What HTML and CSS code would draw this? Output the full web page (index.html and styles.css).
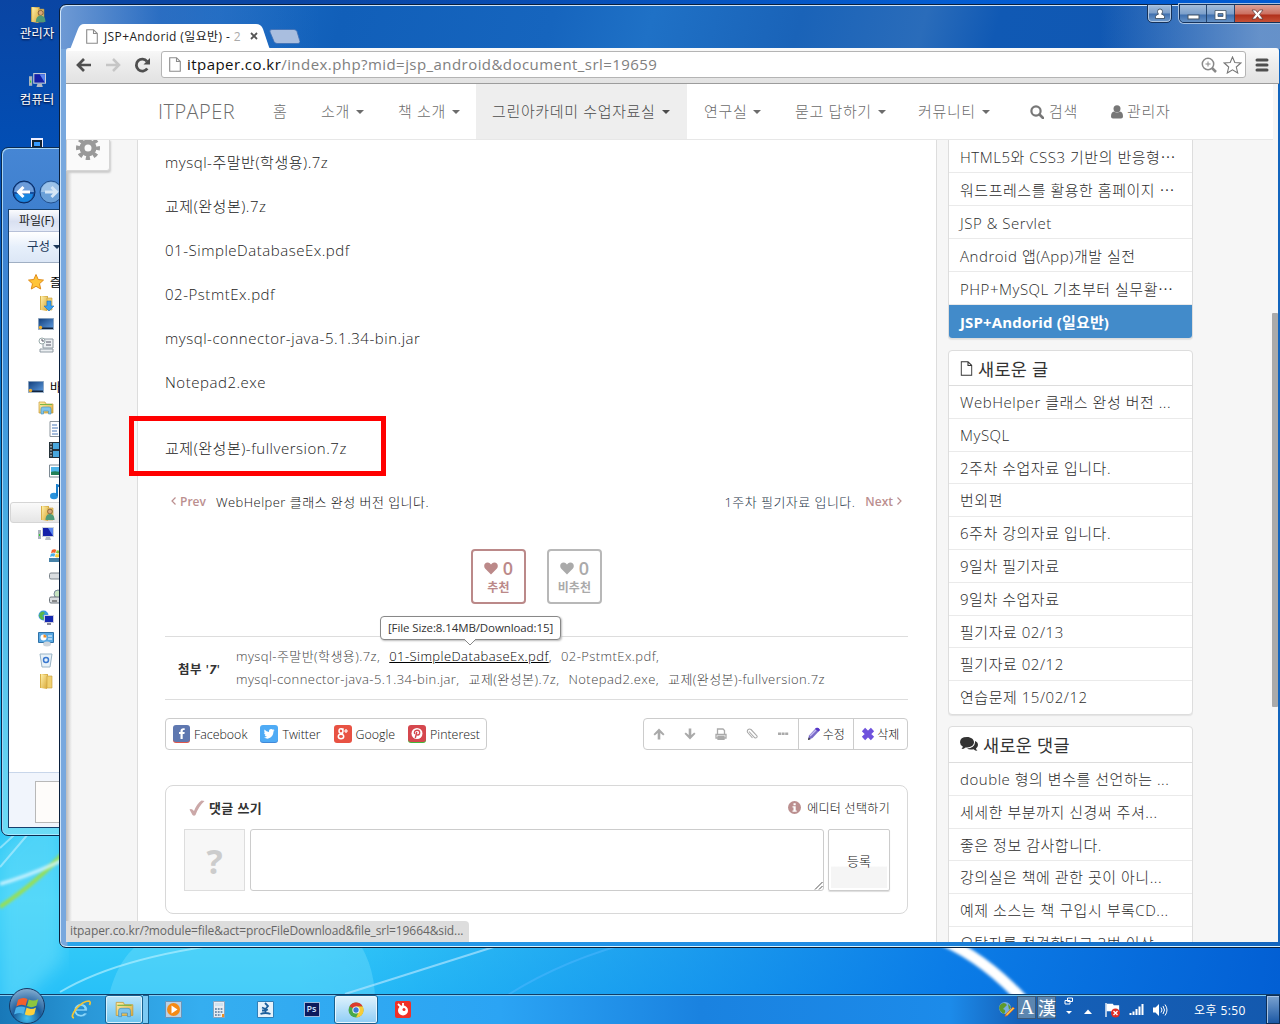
FILE: index.html
```html
<!DOCTYPE html>
<html lang="ko">
<head>
<meta charset="utf-8">
<title>JSP+Andorid (일요반)</title>
<link rel="stylesheet" href="styles.css">
</head>
<body>
<svg width="0" height="0" class="defs">
  <defs>
    <linearGradient id="gold" x1="0" y1="0" x2="1" y2="1"><stop offset="0" stop-color="#fff0a8"/><stop offset="1" stop-color="#d9a93a"/></linearGradient>
    <linearGradient id="screen" x1="0" y1="0" x2="1" y2="1"><stop offset="0" stop-color="#14407c"/><stop offset="1" stop-color="#5d9be0"/></linearGradient>
    <symbol id="folder" viewBox="0 0 16 16"><path d="M2 1h8v14H2z" fill="#d8b04a"/><path d="M3 1l6 1v14l-6-1z" fill="url(#gold)"/><path d="M9 3h5v12H9z" fill="#f0d070" stroke="#c89b35" stroke-width=".6"/></symbol>
    <symbol id="user-folder" viewBox="0 0 16 16"><use href="#folder"/><circle cx="11" cy="6.5" r="2.4" fill="#d8a878" stroke="#6b4a2a" stroke-width=".7"/><path d="M6.5 15c0-4 2-6 4.5-6s4.500 2 4.500 6z" fill="#4f9a78"/></symbol>
    <symbol id="computer" viewBox="0 0 16 16"><path d="M0 4h3v9H0z" fill="#aab4bc"/><path d="M1 8h1v2H1z" fill="#3c3"/><path d="M4 1h12v10H4z" fill="#ccd3da"/><path d="M5 2h10v8H5z" fill="#1420a8"/><path d="M10 2h5v8z" fill="#5a86f0"/><path d="M8 11h4l1 3H7z" fill="#b5bcc4"/></symbol>
    <symbol id="desktop" viewBox="0 0 16 16"><path d="M0 2h16v12H0z" fill="#9fb3c8"/><path d="M.8 2.800h14.400v10H.8z" fill="url(#screen)"/><path d="M1 11.500h14v1.500H1z" fill="#12243e"/><circle cx="2.500" cy="11.500" r="1.700" fill="#f0b030"/></symbol>
    <symbol id="library" viewBox="0 0 16 16"><path d="M1 2h6l1 2h7v9H1z" fill="url(#gold)" stroke="#c79b3a" stroke-width=".7"/><path d="M2 4.500h12" stroke="#7ab648"/><path d="M3 14V9q0-2 2-2h6q2 0 2 2v5h-2.500v-3h-5v3z" fill="#7fc4ea" stroke="#4590c0" stroke-width=".6"/></symbol>
    <symbol id="page" viewBox="0 0 12 15"><path d="M.7.7h6.800l3.800 3.800v9.800H.7zM7.500.7v3.800h3.800" fill="#fff" stroke="currentColor" stroke-width="1.100"/></symbol>
    <symbol id="heart" viewBox="0 0 14 13"><path d="M7 12.500L1.300 6.800C-1 4 .5.500 3.600.5 5.500.5 6.500 1.800 7 2.600 7.500 1.800 8.500.5 10.400.5c3.100 0 4.600 3.500 2.300 6.300z" fill="currentColor"/></symbol>
    <symbol id="arrow" viewBox="0 0 12 12"><path d="M6 .5l5.500 5.700-1.300 1.400-2.900-2.700V11.500H4.700V4.900L1.800 7.600.5 6.200z" fill="currentColor"/></symbol>
    <symbol id="flag4" viewBox="0 0 20 20"><path d="M3 5q3.500-2.500 7-.5L8.600 9.500Q5 7.800 1.700 10z" fill="#f2602c"/><path d="M11 4.800q3.500 1.800 7-.3L16.600 9.400q-3.500 2-7 .3z" fill="#8dc63f"/><path d="M1.400 11q3.500-2 7-.3L7 15.600q-3.500-1.800-7 .4z" fill="#4ab2ea"/><path d="M9.300 11q3.500 1.800 7-.3L15 15.700q-3.500 2-7 .2z" fill="#fcd03c"/></symbol>
  </defs>
</svg>

<div class="screen">
  <svg class="wallpaper" viewBox="0 0 1280 1024">
    <defs><filter id="soft"><feGaussianBlur stdDeviation="1.500"/></filter><filter id="wide"><feGaussianBlur stdDeviation="8"/></filter></defs>
    <path d="M0 850L62 790V960L0 1024z" fill="#6fe0fb" opacity=".5" filter="url(#wide)"/>
    <path d="M108 1000Q120 940 170 930H350Q375 960 375 1000z" fill="#7fe2fb" opacity=".35"/>
    <path d="M0 907Q40 880 64 852" fill="none" stroke="#9be04a" stroke-width="4" filter="url(#soft)"/>
    <path d="M0 884Q50 870 110 835" fill="none" stroke="#d8f6ff" stroke-width="3" filter="url(#soft)"/>
    <path d="M0 867L40 820M0 848L24 826" stroke="#c0f0ff" stroke-width="2" opacity=".6"/>
    <path d="M60 992Q130 950 280 938" fill="none" stroke="#aeeeff" stroke-width="2" opacity=".7"/>
    <path d="M345 994L500 945" stroke="#aee4ff" stroke-width="2" opacity=".7"/>
    <path d="M500 1000Q560 960 640 940" fill="none" stroke="#50b8ff" stroke-width="2" opacity=".5"/>
    <path d="M942 940Q998 964 1048 1030" fill="none" stroke="#fff" stroke-width="11" filter="url(#soft)"/>
  </svg>

  <div class="desk-icons">
    <div class="desk-icon"><svg width="17" height="17"><use href="#user-folder"/></svg><span>관리자</span></div>
    <div class="desk-icon"><svg width="17" height="17"><use href="#computer"/></svg><span>컴퓨터</span></div>
    <div class="desk-icon"><svg width="17" height="17" viewBox="0 0 17 17"><path d="M2 0h12v12H2z" fill="#eef"/><path d="M3 2h10v8H3z" fill="#123"/><path d="M5 4h6v4H5z" fill="#39f"/></svg></div>
  </div>

  <div class="explorer">
    <div class="ex-title">
      <svg width="24" height="24" viewBox="0 0 24 24"><circle cx="12" cy="12" r="11" fill="#174fa0" stroke="#0b2a5e"/><path d="M2 12a10 10 0 0 1 20 0z" fill="#6c9bd8"/><path d="M3 14a9 8 0 0 0 18 0z" fill="#1a86e0"/><path d="M18 12H7M11.500 7L6.500 12l5 5" stroke="#fff" stroke-width="3" fill="none"/></svg>
      <svg width="24" height="24" viewBox="0 0 24 24"><circle cx="12" cy="12" r="11" fill="#6aa0d8" stroke="#22508e"/><path d="M2 12a10 10 0 0 1 20 0z" fill="#9cc2e8"/><path d="M6 12h11M12.500 7l5 5-5 5" stroke="#d4e6f6" stroke-width="3" fill="none"/></svg>
    </div>
    <div class="ex-body">
      <div class="ex-menu">파일(F)</div>
      <div class="ex-bar">구성 <i class="caret"></i></div>
      <div class="ex-tree">
        <div class="tr l1"><svg width="16" height="16" viewBox="0 0 16 16"><path d="M8 .5l2.200 5 5.300.6-4 3.600 1.200 5.300L8 12.300 3.300 15l1.200-5.300-4-3.600 5.300-.6z" fill="#ffc53a" stroke="#e08a18"/></svg><span>즐겨</span></div>
        <div class="tr l2"><svg width="16" height="16" viewBox="0 0 16 16"><use href="#folder"/><path d="M9 6h4v5h3l-5 5-5-5h3z" fill="#3aa0ee" stroke="#1b6fc0" stroke-width=".6"/></svg></div>
        <div class="tr l2"><svg width="16" height="16"><use href="#desktop"/></svg></div>
        <div class="tr l2"><svg width="16" height="16" viewBox="0 0 16 16"><path d="M5 2h10v9H5zM2 12h13v3H2z" fill="#eceff2" stroke="#8f9aa3"/><circle cx="4" cy="4" r="3" fill="#fff" stroke="#9aa"/><path d="M4 2v2h2M8 5h5M8 8h5" stroke="#556" fill="none"/></svg></div>
        <div class="tr"></div>
        <div class="tr l1"><svg width="16" height="16"><use href="#desktop"/></svg><span>바탕</span></div>
        <div class="tr l2"><svg width="16" height="16"><use href="#library"/></svg></div>
        <div class="tr l3"><svg width="16" height="16" viewBox="0 0 16 16"><path d="M1 .5h14v15H1z" fill="#fff" stroke="#8b949c"/><path d="M3 4h5M3 7h6M3 10h5M3 13h6" stroke="#4a78b8"/></svg></div>
        <div class="tr l3"><svg width="16" height="16" viewBox="0 0 16 16"><path d="M0 0h16v16H0z" fill="#26323a"/><path d="M4 1h12v6H4zM4 9h12v6H4z" fill="#49a7de"/><path d="M2 1v14" stroke="#fff" stroke-dasharray="1.500"/></svg></div>
        <div class="tr l3"><svg width="16" height="16" viewBox="0 0 16 16"><path d="M.5 2h15v12H.5z" fill="#fff" stroke="#7d8a94"/><path d="M2 4h13v8H2z" fill="#4fb4e8"/><path d="M2 9q4-2 13 1v2H2z" fill="#228058"/></svg></div>
        <div class="tr l3"><svg width="16" height="16" viewBox="0 0 16 16"><ellipse cx="5" cy="12" rx="4" ry="3.200" fill="#2a92dc"/><path d="M8 12V1l6 3" stroke="#1a7fcc" stroke-width="2" fill="none"/></svg></div>
        <div class="tr l2 sel"><svg width="16" height="16"><use href="#user-folder"/></svg></div>
        <div class="tr l2"><svg width="16" height="16"><use href="#computer"/></svg></div>
        <div class="tr l3"><svg width="16" height="16" viewBox="0 0 16 16"><path d="M0 11h16v4H0z" fill="#4782a8"/><g transform="translate(1 0) scale(.62)"><use href="#flag4" width="20" height="20"/></g></svg></div>
        <div class="tr l3"><svg width="16" height="16" viewBox="0 0 16 16"><rect x=".5" y="5" width="15" height="6" rx="1.500" fill="#dadde0" stroke="#7c858c"/></svg></div>
        <div class="tr l3"><svg width="16" height="16" viewBox="0 0 16 16"><circle cx="9" cy="5" r="4" fill="#c5e2c0" stroke="#789"/><rect x=".5" y="8" width="15" height="6" rx="1.500" fill="#dadde0" stroke="#6c757c"/><path d="M3 12h5" stroke="#333"/></svg></div>
        <div class="tr l2"><svg width="16" height="16" viewBox="0 0 16 16"><circle cx="5.500" cy="5.500" r="5" fill="#3a9be0"/><path d="M2 3q3-3 5 0L4 6q3 1 1 4-3-1-4-4z" fill="#5ab848"/><path d="M6 5h10v8H6z" fill="#ccd"/><path d="M7 6h8v6H7z" fill="#1428b0"/><path d="M9 13h4v2H9z" fill="#889"/></svg></div>
        <div class="tr l2"><svg width="16" height="16" viewBox="0 0 16 16"><path d="M.5 1.500h15v10H.5z" fill="#59a8e2" stroke="#2f72a8"/><circle cx="5.500" cy="6.500" r="3" fill="#fff"/><path d="M5.500 6.500v-3a3 3 0 0 1 3 3z" fill="#f08a20"/><path d="M10 5h4M10 8h4" stroke="#fff"/><ellipse cx="9" cy="13" rx="4" ry="2.500" fill="#cdd5dc"/></svg></div>
        <div class="tr l2"><svg width="16" height="16" viewBox="0 0 16 16"><path d="M2 2h12l-2 13H4z" fill="#e8f2f8" stroke="#9ab4c6"/><circle cx="8" cy="8" r="2.500" fill="none" stroke="#3a78d0" stroke-width="1.500"/></svg></div>
        <div class="tr l2"><svg width="16" height="16"><use href="#folder"/></svg></div>
      </div>
      <div class="ex-detail"><div class="ex-thumb"></div></div>
    </div>
  </div>

  <div class="chrome">
    <div class="tabstrip">
      <div class="tab">
        <svg class="tab-bg" width="206" height="27" viewBox="0 0 206 27"><path d="M0 27q4-1 5-4l7-18q2-5 6-5H190q5 0 7 5l6 18q1 3 3 4z" fill="#fff"/></svg>
        <div class="tab-in"><svg class="grey" width="12" height="15"><use href="#page"/></svg><span class="tab-title">JSP+Andorid (일요반) - <b>2</b></span>
        <svg width="8" height="8" viewBox="0 0 8 8"><path d="M1 1l6 6M7 1L1 7" stroke="#555" stroke-width="1.800"/></svg></div>
      </div>
      <svg class="newtab" width="31" height="15" viewBox="0 0 31 15"><path d="M3 .5h22q2 0 3 2l3 10q0 2-2 2H8q-2 0-3-2L1 3Q0 .5 3 .5z" fill="#a9bedf" stroke="#3f6fb4" stroke-width=".8"/></svg>
      <div class="winbtns">
        <div class="wb user"><svg width="12" height="11" viewBox="0 0 12 11"><path d="M1.500 10.500V8.500Q2 6.500 4.500 6.200 3.500 5 3.500 3.500 3.500 1 6 1t2.500 2.500Q8.500 5 7.500 6.200 10 6.500 10.500 8.500v2z" fill="#fff" stroke="#345" stroke-width=".8"/></svg></div>
        <div class="wbs"><div class="wb min"><svg width="13" height="6" viewBox="0 0 13 6"><rect x="1" y="1" width="11" height="4" fill="#fff" stroke="#456"/></svg></div><div class="wb max"><svg width="13" height="10" viewBox="0 0 13 10"><path d="M1 .5h11v9H1zM4 3.500h5v3H4z" fill="#fff" fill-rule="evenodd" stroke="#456" stroke-width=".8"/></svg></div><div class="wb close"><svg width="13" height="11" viewBox="0 0 13 11"><path d="M1 1h3.500l2 2.500L8.500 1H12L8.500 5.500 12 10H8.500l-2-2.500-2 2.500H1l3.500-4.500z" fill="#fff" stroke="#533" stroke-width=".7"/></svg></div></div>
      </div>
    </div>
    <div class="toolbar">
      <svg width="16" height="16" viewBox="0 0 16 16"><path d="M15 8H2.500M8 2L2 8l6 6" fill="none" stroke="#4f4f4f" stroke-width="2.700"/></svg>
      <svg width="16" height="16" viewBox="0 0 16 16"><path d="M1 8h12.500M8 2l6 6-6 6" fill="none" stroke="#c6c6c6" stroke-width="2.500"/></svg>
      <svg width="17" height="16" viewBox="0 0 17 16"><path d="M13.300 11.500A6 6 0 1 1 13 4.300" fill="none" stroke="#4f4f4f" stroke-width="2.800"/><path d="M16 1v6.500H9.500z" fill="#4f4f4f"/></svg>
      <div class="omnibox"><svg class="grey" width="12" height="15"><use href="#page"/></svg><span class="url"><b>itpaper.co.kr</b>/index.php?mid=jsp_android&amp;document_srl=19659</span>
        <svg width="16" height="16" viewBox="0 0 16 16"><circle cx="7" cy="7" r="5.700" fill="none" stroke="#888" stroke-width="1.500"/><path d="M7 4.500v5M4.500 7h5" stroke="#888"/><path d="M11 11l4 4" stroke="#888" stroke-width="2.500"/></svg>
        <svg width="19" height="18" viewBox="0 0 19 18"><path d="M9.500 1l2.300 5.500 6 .5-4.500 4 1.400 6-5.200-3.200L4.300 17l1.400-6L1.200 7l6-.5z" fill="#fff" stroke="#777" stroke-width="1.100"/></svg>
      </div>
      <svg width="14" height="14" viewBox="0 0 14 14"><path d="M2 2h10M2 7h10M2 12h10" stroke="#4f4f4f" stroke-width="3" stroke-linecap="round"/></svg>
    </div>

    <div class="viewport">
      <div class="navbar">
        <span class="brand">ITPAPER</span>
        <span class="ni n1">홈</span>
        <span class="ni n2">소개 <i class="caret"></i></span>
        <span class="ni n3">책 소개 <i class="caret"></i></span>
        <span class="ni n4 on">그린아카데미 수업자료실 <i class="caret"></i></span>
        <span class="ni n5">연구실 <i class="caret"></i></span>
        <span class="ni n6">묻고 답하기 <i class="caret"></i></span>
        <span class="ni n7">커뮤니티 <i class="caret"></i></span>
        <span class="ni n8"><svg width="14" height="14" viewBox="0 0 14 14"><circle cx="6" cy="6" r="4.600" fill="none" stroke="#777" stroke-width="2.200"/><path d="M9.500 9.500l3.500 3.500" stroke="#777" stroke-width="2.600" stroke-linecap="round"/></svg>검색</span>
        <span class="ni n9"><svg width="12" height="14" viewBox="0 0 12 14"><circle cx="6" cy="3.800" r="3.500" fill="#777"/><path d="M0 11.500Q0 7 3 6.500q3 2 6 0 3 .5 3 5Q12 13.500 10 13.500H2Q0 13.500 0 11.500z" fill="#777"/></svg>관리자</span>
      </div>
      <div class="page">
        <div class="gutter"><div class="gear"><svg width="24" height="24" viewBox="0 0 24 24"><circle cx="12" cy="12" r="6" fill="none" stroke="#999" stroke-width="5"/><circle cx="12" cy="12" r="10" fill="none" stroke="#999" stroke-width="4" stroke-dasharray="4.200 3.654" stroke-dashoffset="2.100"/></svg></div></div>
        <div class="article">
          <ul class="files">
            <li>mysql-주말반(학생용).7z</li>
            <li>교제(완성본).7z</li>
            <li>01-SimpleDatabaseEx.pdf</li>
            <li>02-PstmtEx.pdf</li>
            <li>mysql-connector-java-5.1.34-bin.jar</li>
            <li>Notepad2.exe</li>
            <li class="last">교제(완성본)-fullversion.7z</li>
          </ul>
          <div class="pager">
            <svg width="5" height="8" viewBox="0 0 5 8"><path d="M4.500.5L1 4l3.500 3.500" fill="none" stroke="#bb8f8f" stroke-width="1.200"/></svg><b>Prev</b><span>WebHelper 클래스 완성 버전 입니다.</span>
            <span class="nx">1주차 필기자료 입니다.</span><b>Next</b><svg width="5" height="8" viewBox="0 0 5 8"><path d="M.5.5L4 4 .5 7.500" fill="none" stroke="#bb8f8f" stroke-width="1.200"/></svg>
          </div>
          <div class="votes">
            <div class="vote up"><div><svg width="14" height="13"><use href="#heart"/></svg>0</div><small>추천</small></div>
            <div class="vote"><div><svg width="14" height="13"><use href="#heart"/></svg>0</div><small>비추천</small></div>
          </div>
          <div class="attach">
            <div class="at-label">첨부 '<em>7</em>'</div>
            <div class="at-list">
              <div><span>mysql-주말반(학생용).7z,</span><span class="hov"><u>01-SimpleDatabaseEx.pdf</u>,</span><span>02-PstmtEx.pdf,</span></div>
              <div><span>mysql-connector-java-5.1.34-bin.jar,</span><span>교제(완성본).7z,</span><span>Notepad2.exe,</span><span>교제(완성본)-fullversion.7z</span></div>
            </div>
          </div>
          <div class="tools">
            <div class="share">
              <span><svg width="17" height="18" viewBox="0 0 17 18"><rect y="2" width="17" height="16" rx="3" fill="#e0574c"/><rect width="17" height="17" rx="3" fill="#5f78b0"/><path d="M9.700 14V9h1.700l.3-2H9.700V6q0-.9 1-.9h1V3.200Q7.500 2.700 7.500 5.800V7H6v2h1.500v5z" fill="#fff"/></svg>Facebook</span>
              <span><svg width="18" height="18" viewBox="0 0 18 18"><rect y="2" width="18" height="16" rx="3" fill="#4088d8"/><rect width="18" height="17" rx="3" fill="#4fabf5"/><path d="M4 12.500q2 0 3-.9-1.800-.2-2.300-1.700h1Q4 9.300 4 7.400l1 .3Q3.600 6.300 4.500 4.600 6.300 6.700 9 6.900 8.700 4.100 11.200 4q1 0 1.700.7l1.400-.5-.9 1.300 1.200-.3-1.100 1.300Q13.300 12 8.300 13.600 6 13.900 4 12.500z" fill="#fff"/></svg>Twitter</span>
              <span><svg width="18" height="18" viewBox="0 0 18 18"><rect width="18" height="18" rx="3" fill="#e85243"/><ellipse cx="7" cy="6" rx="2" ry="2.200" fill="none" stroke="#fff" stroke-width="1.500"/><ellipse cx="7" cy="11.500" rx="2.700" ry="2.200" fill="none" stroke="#fff" stroke-width="1.500"/><path d="M7 4h3M8 8l1 1M12 4v4M10 6h4" stroke="#fff" stroke-width="1.200"/></svg>Google</span>
              <span><svg width="18" height="18" viewBox="0 0 18 18"><rect y="2" width="18" height="16" rx="3" fill="#45b83c"/><rect width="18" height="17" rx="3" fill="#d5474e"/><circle cx="9" cy="8.500" r="5.500" fill="#fff"/><path d="M7.300 13l1.500-6M6.700 9Q5.500 5.500 9 5.300t2.500 3.500Q10.500 10.500 8.500 9.700" fill="none" stroke="#d5474e" stroke-width="1.400"/></svg>Pinterest</span>
            </div>
            <div class="acts">
              <div class="cell icons">
                <svg width="12" height="12"><use href="#arrow"/></svg>
                <svg width="12" height="12" class="flip"><use href="#arrow"/></svg>
                <svg width="12" height="12" viewBox="0 0 12 12"><path d="M2.500 6V1h5.500l1.500 1.500V6M1 10V6.500h10V10zM3 8.500h6v3H3z" fill="none" stroke="currentColor" stroke-width="1.300"/></svg>
                <svg width="12" height="12" viewBox="0 0 12 12"><path d="M3 3.500l5.500 6q1.300 1 2.200 0t0-2L5 1.500Q3.500.5 2.200 1.500t-.7 2.800L6.500 10" fill="none" stroke="currentColor" stroke-width="1.100"/></svg>
                <svg width="12" height="12" viewBox="0 0 12 12"><path d="M1 4.500h3v2.500H1zM4.600 4.500h3v2.500h-3zM8.200 4.500h3v2.500h-3z" fill="currentColor"/></svg>
              </div>
              <div class="cell"><svg width="14" height="14" viewBox="0 0 14 14"><path d="M1 13l1-4.500 7-7.500Q11.500 0 13 3l-7.500 8z" fill="#7a6cc8"/><path d="M9 1q2.500-1 4 2l-1.500 1.500-3.500-2.500z" fill="#5636c8"/><path d="M3 9l6-6" stroke="#c3baf0" stroke-width="1.500"/><path d="M1 13l.6-2.500 2 1.700z" fill="#333"/></svg>수정</div>
              <div class="cell"><svg width="14" height="14" viewBox="0 0 14 14"><path d="M2.500 2.500l9 9M11.500 2.500l-9 9" stroke="#6f52dc" stroke-width="4.600"/></svg>삭제</div>
            </div>
          </div>
          <div class="comment">
            <div class="cm-head"><svg width="16" height="16" viewBox="0 0 16 16"><path d="M.5 9.500Q2.500 8 5 11 8 3.500 12.500.5l3 .5Q9.500 6.500 6.500 15 5 16.500 3.500 15z" fill="#cba8a8"/></svg><b>댓글 쓰기</b>
              <span class="ed"><svg width="13" height="13" viewBox="0 0 13 13"><circle cx="6.500" cy="6.500" r="6.500" fill="#bb8f8f"/><path d="M5.500 2.300h2.200v1.900H5.500zM4.500 5.200h3.200v4.300h1v1.300H4.500V9.500h1v-3h-1z" fill="#fff"/></svg>에디터 선택하기</span></div>
            <div class="cm-row"><div class="avatar">?</div><div class="ta"><svg width="9" height="9" viewBox="0 0 9 9"><path d="M1 8.500L8.500 1M5 8.500L8.500 5" stroke="#555"/></svg></div><div class="send">등록</div></div>
          </div>
        </div>
        <div class="side">
          <div class="panel first">
            <p>HTML5와 CSS3 기반의 반응형⋯</p><p>워드프레스를 활용한 홈페이지 ⋯</p><p>JSP &amp; Servlet</p><p>Android 앱(App)개발 실전</p><p>PHP+MySQL 기초부터 실무활⋯</p><p class="cur">JSP+Andorid (일요반)</p>
          </div>
          <div class="panel">
            <h3><svg width="13" height="15" viewBox="0 0 12 15"><use href="#page"/></svg>새로운 글</h3>
            <p>WebHelper 클래스 완성 버전 ...</p><p>MySQL</p><p>2주차 수업자료 입니다.</p><p>번외편</p><p>6주차 강의자료 입니다.</p><p>9일차 필기자료</p><p>9일차 수업자료</p><p>필기자료 02/13</p><p>필기자료 02/12</p><p>연습문제 15/02/12</p>
          </div>
          <div class="panel">
            <h3 class="tall"><svg width="18" height="15" viewBox="0 0 18 15"><path d="M7 0c4 0 7 2.300 7 5.300s-3 5.200-7 5.200l-1.500-.1Q4 12 1.500 12q1.200-1.200 1.300-2.500Q0 8 0 5.300 0 0 7 0z" fill="#333"/><path d="M15 4q3 1.200 3 4 0 2-2 3.400.2 1.400 1.500 2.400-2.500 0-4-1.500Q9 13 7 11.500q7.500-.3 8-6z" fill="#333"/></svg>새로운 댓글</h3>
            <p>double 형의 변수를 선언하는 ...</p><p>세세한 부분까지 신경써 주셔...</p><p>좋은 정보 감사합니다.</p><p>강의실은 책에 관한 곳이 아니...</p><p>예제 소스는 책 구입시 부록CD...</p><p>오탈자를 점검한다고 3번 이상</p>
          </div>
        </div>
        <div class="rail"><div class="thumb"></div></div>
      </div>
      <div class="status">itpaper.co.kr/?module=file&amp;act=procFileDownload&amp;file_srl=19664&amp;sid...</div>
    </div>
  </div>

  <div class="redbox"></div>
  <div class="tip">[File Size:8.14MB/Download:15]<svg width="12" height="7" viewBox="0 0 12 7"><path d="M0 0l6 6 6-6" fill="#fff" stroke="#888"/></svg></div>

  <div class="taskbar">
    <div class="orb"><svg width="38" height="38" viewBox="0 0 38 38"><defs><radialGradient id="orb" cx=".5" cy=".85" r=".8"><stop offset="0" stop-color="#3fc0f0"/><stop offset=".5" stop-color="#1a5c9c"/><stop offset="1" stop-color="#7aa6cc"/></radialGradient></defs><circle cx="19" cy="19" r="17.500" fill="url(#orb)" stroke="#153a66"/><svg x="6" y="6" width="27" height="27"><use href="#flag4"/></svg></svg></div>
    <div class="tb t1"><svg width="20" height="20" viewBox="0 0 20 20"><path d="M16.500 11H5.500q.5 3.500 4.500 3.500 2 0 3-1.500h3.300Q14.500 17 10 17q-7-.5-7-7 .5-6 7-6.500 7 .5 6.500 7.500zM5.700 9h7.500Q13 6.300 9.800 6.200 6.500 6.300 5.700 9z" fill="#8ad8fb" stroke="#2284c8" stroke-width=".6"/><path d="M3 18Q-1 17 5 9 12 1 18 1q2 1 .5 4" fill="none" stroke="#f5c534" stroke-width="1.700"/></svg></div>
    <div class="tb t2"><svg width="19" height="19"><use href="#library"/></svg></div>
    <div class="tb t3"></div>
    <div class="tb t4"><svg width="17" height="17" viewBox="0 0 17 17"><path d="M.5.500h16v16H.5z" fill="#b8d0e4" stroke="#6a94b8"/><circle cx="8.500" cy="8.500" r="6.500" fill="#f58a14"/><path d="M6.500 4.500l6 4-6 4z" fill="#fff"/></svg></div>
    <div class="tb t5"><svg width="12" height="17" viewBox="0 0 12 17"><path d="M.5.500h11v16H.5z" fill="#e8eef4" stroke="#8ba4bc"/><path d="M2 2h8v3H2z" fill="#cfe2f0"/><path d="M2 8h8M2 11h8M2 14h6" stroke="#7894b0" stroke-width="1.800" stroke-dasharray="1.800 1"/><path d="M9 13h2v3H9z" fill="#f09020"/></svg></div>
    <div class="tb t6"><svg width="17" height="17" viewBox="0 0 17 17"><path d="M.5.500h16v16H.5z" fill="#e6f2fb" stroke="#2f7fb8"/><path d="M8 2l3 3-2.500 3L5 6.500M8.500 8v4M5 9.500h3l3-1M3.500 13q5-2 10 0" fill="none" stroke="#1d5f9c" stroke-width="1.800"/></svg></div>
    <div class="tb t7"><span class="ps">Ps</span></div>
    <div class="tb t8"><svg width="16" height="16" viewBox="0 0 16 16"><circle cx="8" cy="8" r="7.500" fill="#4aa84a"/><path d="M8 8L1.500 4.200A7.500 7.500 0 0 1 14.700 4.500H8z" fill="#dd3a2e"/><path d="M8 4.500h6.800A7.500 7.500 0 0 1 8 15.500L11 9.500z" fill="#f8cc38"/><circle cx="8" cy="8" r="3.600" fill="#fff"/><circle cx="8" cy="8" r="2.700" fill="#3c78d8"/></svg></div>
    <div class="tb t9"><svg width="16" height="17" viewBox="0 0 16 17"><rect width="16" height="17" rx="2" fill="#f03028"/><circle cx="8" cy="9.500" r="5" fill="#fff"/><circle cx="9" cy="8.500" r="1.500" fill="#f03028"/><path d="M3 3l3 3M8 2v3" stroke="#fff" stroke-width="1.800"/></svg></div>
    <div class="tray">
      <svg width="17" height="17" viewBox="0 0 17 17"><circle cx="7" cy="7" r="6" fill="#78aee0"/><path d="M2 4q4-4 7 0L5 8q4 1 1 5-4-2-5-6zM10 3l3 3-2 3z" fill="#5e9a2c"/><path d="M8 13l7-7 1.500 1.500-7 7-2.500.8z" fill="#f5c040" stroke="#d85a28" stroke-width=".7"/></svg>
      <span class="ime a">A</span><span class="ime">漢</span>
      <svg class="stk" width="10" height="18" viewBox="0 0 10 18"><path d="M3.500 1h5v3.500h-5zM1 3.500h5V7H1z" fill="none" stroke="#fff"/><path d="M2 14h6l-3 3z" fill="#fff"/></svg>
      <svg class="tray-up" width="8" height="5" viewBox="0 0 8 5"><path d="M0 5l4-4.500L8 5z" fill="#fff"/></svg>
      <svg class="fl" width="16" height="16" viewBox="0 0 16 16"><path d="M1 1v14M2.500 2.500h5l1 1.500h5v6h-6l-1-1.500h-4z" stroke="#fff" stroke-width="1.300" fill="#fff"/><circle cx="10.500" cy="11" r="4.500" fill="#e02c24"/><path d="M8.500 9l4 4M12.500 9l-4 4" stroke="#fff" stroke-width="1.300"/></svg>
      <svg class="sg" width="15" height="13" viewBox="0 0 15 13"><path d="M1.500 12v-2M4.500 12V8.500M7.500 12V6M10.500 12V3.500M13.500 12V1" stroke="#fff" stroke-width="2"/></svg>
      <svg class="vo" width="16" height="14" viewBox="0 0 16 14"><path d="M1 4.500h2.500L7 1v12L3.500 9.500H1z" fill="#fff"/><path d="M9 4.500q2 2.500 0 5M11 3q3 4 0 8M13 1.500q4 5.500 0 11" fill="none" stroke="#fff"/></svg>
      <span class="clock">오후 5:50</span>
      <span class="peek"></span>
    </div>
  </div>
</div>
</body>
</html>
```

FILE: styles.css
```css
* { box-sizing: border-box; margin: 0; padding: 0; }
body { width: 1280px; height: 1024px; overflow: hidden; font-family: "Open Sans", "Noto Sans CJK KR", sans-serif; font-weight: 300; font-size: 15px; color: #333; }
svg { display: block; flex: none; }
ul { list-style: none; }
.defs { position: absolute; }
.screen { position: relative; width: 1280px; height: 1024px; overflow: hidden;
  background: linear-gradient(90deg, transparent 0, transparent 300px, rgba(0,100,225,.75) 950px, rgba(0,90,210,.95) 1280px), linear-gradient(#0a45a3 0, #0050b8 180px, #0069c8 330px, #0a93dd 500px, #14b4f0 700px, #3ad0f8 900px, #22bcf8 1024px); }
.wallpaper { position: absolute; inset: 0; width: 1280px; height: 1024px; }
.caret { display: inline-block; border: 4px solid transparent; border-top-color: currentColor; border-bottom: 0; vertical-align: 2px; }

.desk-icons { position: absolute; left: 0; top: 6px; width: 74px; display: flex; flex-direction: column; }
.desk-icon { height: 66px; display: flex; flex-direction: column; align-items: center; color: #fff; font-size: 12.5px; font-weight: 400; line-height: 21px; text-shadow: 0 1px 2px #002; }

.explorer { position: absolute; left: 1px; top: 147px; width: 90px; height: 689px; padding: 4px 0 7px 6px; border: 1px solid #0b2b50; border-radius: 7px; box-shadow: inset 1px 1px 0 #a6d4f5, inset 0 -1px 0 #a6eaff; background: linear-gradient(#4686d4 0, #3f80cf 60px, #3b8bd8 200px, #4cb6e6 420px, #6cdcf6 689px); display: flex; flex-direction: column; }
.ex-title { height: 57px; padding: 28px 0 0 4px; display: flex; gap: 3px; }
.ex-body { flex: 1; border: 1px solid #16406e; background: #fff; display: flex; flex-direction: column; overflow: hidden; }
.ex-menu { height: 22px; padding-left: 10px; font-size: 12px; font-weight: 400; line-height: 22px; color: #222; background: linear-gradient(#fbfcfe, #d9e0f1 55%, #e4eaf7); border-bottom: 1px solid #b6c0d8; }
.ex-bar { height: 31px; padding-left: 18px; font-size: 12.5px; font-weight: 400; line-height: 29px; color: #1e395b; background: linear-gradient(#fff, #e6effb 50%, #dce7f6); border-bottom: 1px solid #a0afc3; white-space: nowrap; }
.ex-tree { height: 509px; padding-top: 8px; }
.tr { height: 21px; display: flex; align-items: center; gap: 6px; font-size: 12px; font-weight: 400; color: #000; white-space: nowrap; }
.l1 { padding-left: 19px; }
.l2 { padding-left: 29px; }
.l3 { padding-left: 40px; }
.sel { margin-left: 1px; padding-left: 28px; border: 1px solid #d5d5d5; border-radius: 3px; background: linear-gradient(#fafafa, #e5e5e5); }
.ex-detail { flex: 1; background: #f1f5fc; border-top: 1px solid #c8d6ea; padding: 8px 0 0 26px; }
.ex-thumb { width: 60px; height: 42px; border: 1px solid #b8b8b8; background: #fefcfa; }

.chrome { position: absolute; left: 59px; top: 4px; width: 1231px; height: 944px; border: 1px solid #0a1f3c; border-radius: 7px; padding: 0 10px 6px 6px; box-shadow: inset 1px 1px 0 #cfe4f8, inset 0 -1px 0 #d8f4ff;
  background: linear-gradient(90deg, rgba(120,160,215,.9) 0, rgba(60,115,195,.5) 100px, transparent 260px, transparent 1040px, rgba(130,165,210,.75) 1200px) 0 0/100% 44px no-repeat, linear-gradient(105deg, #1763bd 0, #1a6cc4 13%, #115fb9 23%, #1665be 40%, #1f71c6 48%, #1a63b8 60%, #2a6cba 70%, #1059b4 76%, #1156b0 100%) 0 0/100% 44px no-repeat, linear-gradient(90deg, #78a8de 0 7px, #2aa5ea 8px, #1f8ce4 60%, #1264bd); }
.tabstrip { height: 43px; display: flex; align-items: flex-start; }
.tab { position: relative; width: 206px; height: 27px; margin-top: 19px; }
.tab-bg { position: absolute; }
.tab-in { position: relative; display: flex; align-items: center; height: 24px; padding: 0 14px 0 20px; }
.tab-title { width: 147px; margin: 0 3px 0 6px; font-size: 12px; font-weight: 400; color: #222; white-space: nowrap; letter-spacing: .38px; }
.tab-title b { font-weight: 400; color: #aaa; }
.newtab { margin: 24px 0 0 -3px; }
.winbtns { margin: -1px 0 0 auto; display: flex; gap: 7px; }
.wb { height: 19px; display: flex; align-items: center; justify-content: center; background: linear-gradient(#a4bddb, #7c9fca 48%, #3f6fae 52%, #6f9bcd); }
.user { width: 25px; border: 1px solid #16325a; border-radius: 0 0 5px 5px; box-shadow: inset 0 0 0 1px #b0c8e4; }
.wbs { display: flex; border: 1px solid #16325a; border-radius: 0 0 5px 5px; overflow: hidden; height: 19px; width: 110px; margin-right: -10px; box-shadow: 0 0 0 1px #a9c3e2; }
.min, .max { width: 28px; border-right: 1px solid #24456f; }
.min svg { margin-top: 4px; }
.close { width: 54px; background: linear-gradient(#dba197, #cc6f5f 48%, #b0301b 52%, #cc5a3e); padding-right: 7px; }
.toolbar { height: 36px; width: 1213px; background: linear-gradient(#fafafa, #ededed 45%, #e2e2e2); border-bottom: 1px solid #9c9c9c; display: flex; align-items: center; padding: 0 10px 2px 10px; gap: 13px; border-radius: 3px 3px 0 0; }
.omnibox { width: 1085px; height: 27px; background: #fff; border: 1px solid #b4b4b4; border-radius: 3px; display: flex; align-items: center; padding: 0 3px 0 7px; gap: 6px; margin-left: -3px; }
.url { flex: 1; font-size: 15px; font-weight: 400; color: #808080; line-height: 25px; letter-spacing: .44px; }
.url b { font-weight: 400; color: #111; }
.toolbar > svg:last-child { margin-left: -4px; }
.grey { color: #8c8c8c; }

.viewport { position: relative; width: 1212px; height: 858px; background: #f6f6f6; overflow: hidden; }
.navbar { position: relative; z-index: 2; width: 1207px; height: 56px; background: #fff; border-bottom: 1px solid #e7e7e7; padding-left: 92px; display: flex; line-height: 55px; color: #6c6c6c; white-space: nowrap; }
.brand { width: 99px; font-size: 20px; letter-spacing: .45px; }
.ni { padding-left: 16px; display: flex; align-items: center; gap: 6px; font-size: 15px; letter-spacing: .65px; }
.n1 { width: 48px; } .n2 { width: 77px; } .n3 { width: 94px; } .n4 { width: 211px; } .n5 { width: 91px; padding-left: 17px; } .n6 { width: 124px; padding-left: 17px; } .n7 { width: 112px; } .n8 { width: 81px; gap: 5px; } .n9 { gap: 4px; }
.on { background: #eee; color: #4c4c4c; }
.page { height: 802px; display: flex; align-items: flex-start; background: #f6f6f6; }
.gutter { width: 71px; height: 802px; background: linear-gradient(90deg, #bcbcbc 0, #e4e4e4 4px, #f6f6f6 6px); }
.gear { width: 44px; height: 32px; margin-top: -1px; background: #fafafa; border: 1px solid #d5d5d5; border-radius: 0 0 3px 0; box-shadow: 1px 2px 2px #ccc; padding: 0 0 0 9px; overflow: hidden; }
.gear svg { margin-top: -4px; }
.article { width: 800px; height: 802px; background: #fff; border: 1px solid #ddd; border-width: 0 1px; padding: 0 28px 0 27px; font-size: 15px; }
.files { height: 331px; color: #222; letter-spacing: .53px; }
.files li { height: 44px; line-height: 44px; }
.files .last { margin-top: 22px; }
.pager { height: 60px; padding: 0 6px 0 6px; display: flex; align-items: center; font-size: 13px; color: #111; }
.pager b { color: #bb8f8f; font-weight: 600; margin: 0 5px 0 4px; font-size: 12px; }
.pager span { letter-spacing: .46px; }
.pager > b + span { margin-left: 5px; }
.pager .nx { margin-left: auto; color: #1c3447; margin-right: 6px; }
.pager .nx + b { margin-right: 4px; }
.votes { display: flex; gap: 21px; padding-left: 306px; margin-top: 18px; }
.vote { width: 55px; height: 55px; border: 2px solid #b8b8b8; border-radius: 4px; color: #aaa; text-align: center; font-weight: 600; padding-top: 4px; }
.vote div { display: flex; justify-content: center; align-items: center; gap: 5px; height: 26px; font-size: 18px; line-height: 26px; }
.vote small { display: block; font-size: 12px; line-height: 13px; font-weight: 700; letter-spacing: .2px; }
.up { color: #bb8989; border-color: #bb8989; }
.attach { margin-top: 32px; height: 64px; border: 1px solid #ddd; border-width: 1px 0; display: flex; align-items: center; font-size: 13px; color: #444; }
.at-label { width: 71px; padding-left: 13px; font-weight: 600; color: #333; font-size: 12.5px; white-space: nowrap; letter-spacing: .5px; }
.at-label em { font-weight: 700; }
.at-list { letter-spacing: .43px; }
.at-list > div { display: flex; gap: 9px; line-height: 23px; white-space: nowrap; }
.hov u { color: #000; }
.tools { margin-top: 18px; display: flex; justify-content: space-between; }
.share { width: 322px; height: 32px; border: 1px solid #ccc; border-radius: 4px; display: flex; align-items: center; padding-left: 7px; gap: 13px; font-size: 12.4px; color: #111; }
.share span { display: flex; align-items: center; gap: 4px; }
.acts { height: 32px; width: 265px; border: 1px solid #ccc; border-radius: 4px; display: flex; font-size: 12px; color: #111; }
.cell { flex: 1; display: flex; align-items: center; justify-content: center; gap: 2px; border-left: 1px solid #ccc; }
.icons { flex: 0 0 154px; border: 0; gap: 19px; color: #aaa; }
.flip { transform: rotate(180deg); }
.comment { margin-top: 35px; height: 129px; border: 1px solid #d8d8d8; border-radius: 8px; padding: 10px 17px 0 18px; }
.cm-head { height: 33px; display: flex; align-items: center; padding: 0 0 10px 5px; gap: 4px; font-size: 13px; }
.cm-head b { font-weight: 600; letter-spacing: .4px; }
.ed { margin-left: auto; display: flex; align-items: center; gap: 6px; font-size: 12px; letter-spacing: .3px; color: #111; }
.cm-row { display: flex; }
.avatar { width: 61px; height: 62px; background: #f7f7f7; border: 1px solid #ddd; color: #ccc; font-size: 34px; font-weight: 700; text-align: center; line-height: 62px; }
.ta { width: 574px; height: 62px; margin: 0 4px 0 5px; border: 1px solid #ccc; border-radius: 3px; display: flex; align-items: flex-end; justify-content: flex-end; }
.send { width: 62px; height: 62px; border: 1px solid #ccc; border-radius: 2px; box-shadow: 0 1px 1px #ddd, inset 0 0 0 2px #fff; font-size: 13px; color: #111; text-align: center; line-height: 62px; background: linear-gradient(#fff 60%, #f5f5f5 62%); }

.side { width: 245px; margin-left: 11px; height: 802px; overflow: hidden; color: #2c2c2c; }
.panel { background: #fff; border: 1px solid #ddd; border-radius: 4px; margin-bottom: 11px; box-shadow: 0 1px 1px #e4e4e4; }
.panel p { height: 32.8px; line-height: 32px; padding-left: 11px; border-bottom: 1px solid #eaeaea; white-space: nowrap; font-size: 15px; letter-spacing: .53px; overflow: hidden; }
.panel p:last-child { border-bottom: 0; }
.panel.first { border-top: 0; border-radius: 0 0 4px 4px; height: 199px; }
.panel.first p { height: 33px; line-height: 34px; }
.panel p.cur { background: #428bca; color: #fff; font-weight: 700; border-radius: 0 0 3px 3px; letter-spacing: .15px; }
.panel h3 { height: 35px; display: flex; align-items: center; gap: 5px; padding-left: 11px; border-bottom: 1px solid #ddd; font-size: 17.5px; font-weight: 400; letter-spacing: .3px; color: #333; }
.panel h3.tall { height: 36px; }
.rail { width: 6px; height: 802px; margin-left: auto; padding-top: 173px; }
.thumb { height: 394px; background: #aaa; border-radius: 1px; }
.status { position: absolute; left: 0; bottom: 0; width: 403px; height: 21px; padding-left: 4px; background: #ddd; border-top-right-radius: 4px; color: #666; font-size: 12px; font-weight: 400; line-height: 20px; letter-spacing: -.1px; white-space: nowrap; z-index: 3; }

.redbox { position: absolute; left: 129px; top: 416px; width: 257px; height: 60px; border: 5px solid #f00; }
.tip { position: absolute; left: 380px; top: 616px; width: 181px; height: 24px; border: 1px solid #888; border-radius: 4px; background: #fff; box-shadow: 1px 1px 2px #bbb; font-size: 11.5px; font-weight: 400; line-height: 22px; text-align: center; color: #333; letter-spacing: -.1px; white-space: nowrap; }
.tip svg { position: absolute; left: 83px; top: 22px; }

.taskbar { position: absolute; left: 0; top: 994px; width: 1280px; height: 30px; border-top: 1px solid #123c66; box-shadow: inset 0 1px 0 #7ecdf5; display: flex; background: linear-gradient(90deg, #1878b8 0, #2a98d8 90px, #35aef0 200px, #2ba4f4 500px, #1a82e0 700px, #1c8bea 950px, #1560b8 1020px, #1459ae 1280px); }
.orb { width: 60px; padding-left: 8px; margin-top: -8px; }
.tb { height: 29px; display: flex; align-items: center; justify-content: center; }
.t1 { width: 45px; padding-right: 4px; }
.t2 { width: 38px; border: 1px solid #17608f; border-radius: 3px; background: linear-gradient(#b8e4fa, #6cc4f0); box-shadow: inset 0 0 0 1px #d9f2fe; }
.t3 { width: 6px; border: 1px solid #17608f; border-left: 0; background: #7ccaf4; }
.t4 { width: 48px; } .t5 { width: 44px; } .t6 { width: 48px; } .t7 { width: 45px; }
.t8 { width: 44px; border: 1px solid #17608f; border-radius: 3px; background: linear-gradient(#def2fd, #8fcdf6); box-shadow: inset 0 0 0 1px #e8f7ff; }
.t9 { width: 49px; }
.ps { width: 16px; height: 15px; background: #0c1a5c; border: 1px solid #9ab8dc; color: #cfe0ff; font-size: 9px; font-weight: 600; line-height: 12px; text-align: center; }
.tray { margin-left: auto; display: flex; align-items: center; color: #fff; font-weight: 400; }
.ime { width: 19px; height: 23px; border: 1px solid #3a5878; background: #5c86b0; font: 400 18px/20px "Noto Sans CJK KR", sans-serif; text-align: center; margin: -5px 0 0 1px; }
.ime.a { margin-left: 2px; font: 400 21px/21px "Liberation Serif", serif; }
.stk { margin: -7px 0 0 8px; }
.tray-up { margin: 3px 0 0 10px; }
.fl { margin-left: 13px; } .sg { margin-left: 8px; } .vo { margin-left: 8px; }
.clock { width: 86px; margin-left: 26px; font-size: 12px; letter-spacing: .4px; margin-right: -14px; }
.peek { width: 14px; height: 29px; border: 1px solid #0c2e58; background: linear-gradient(#7aa2d0, #1c58a4); box-shadow: inset 1px 1px 0 #a8c4e4; }
```
